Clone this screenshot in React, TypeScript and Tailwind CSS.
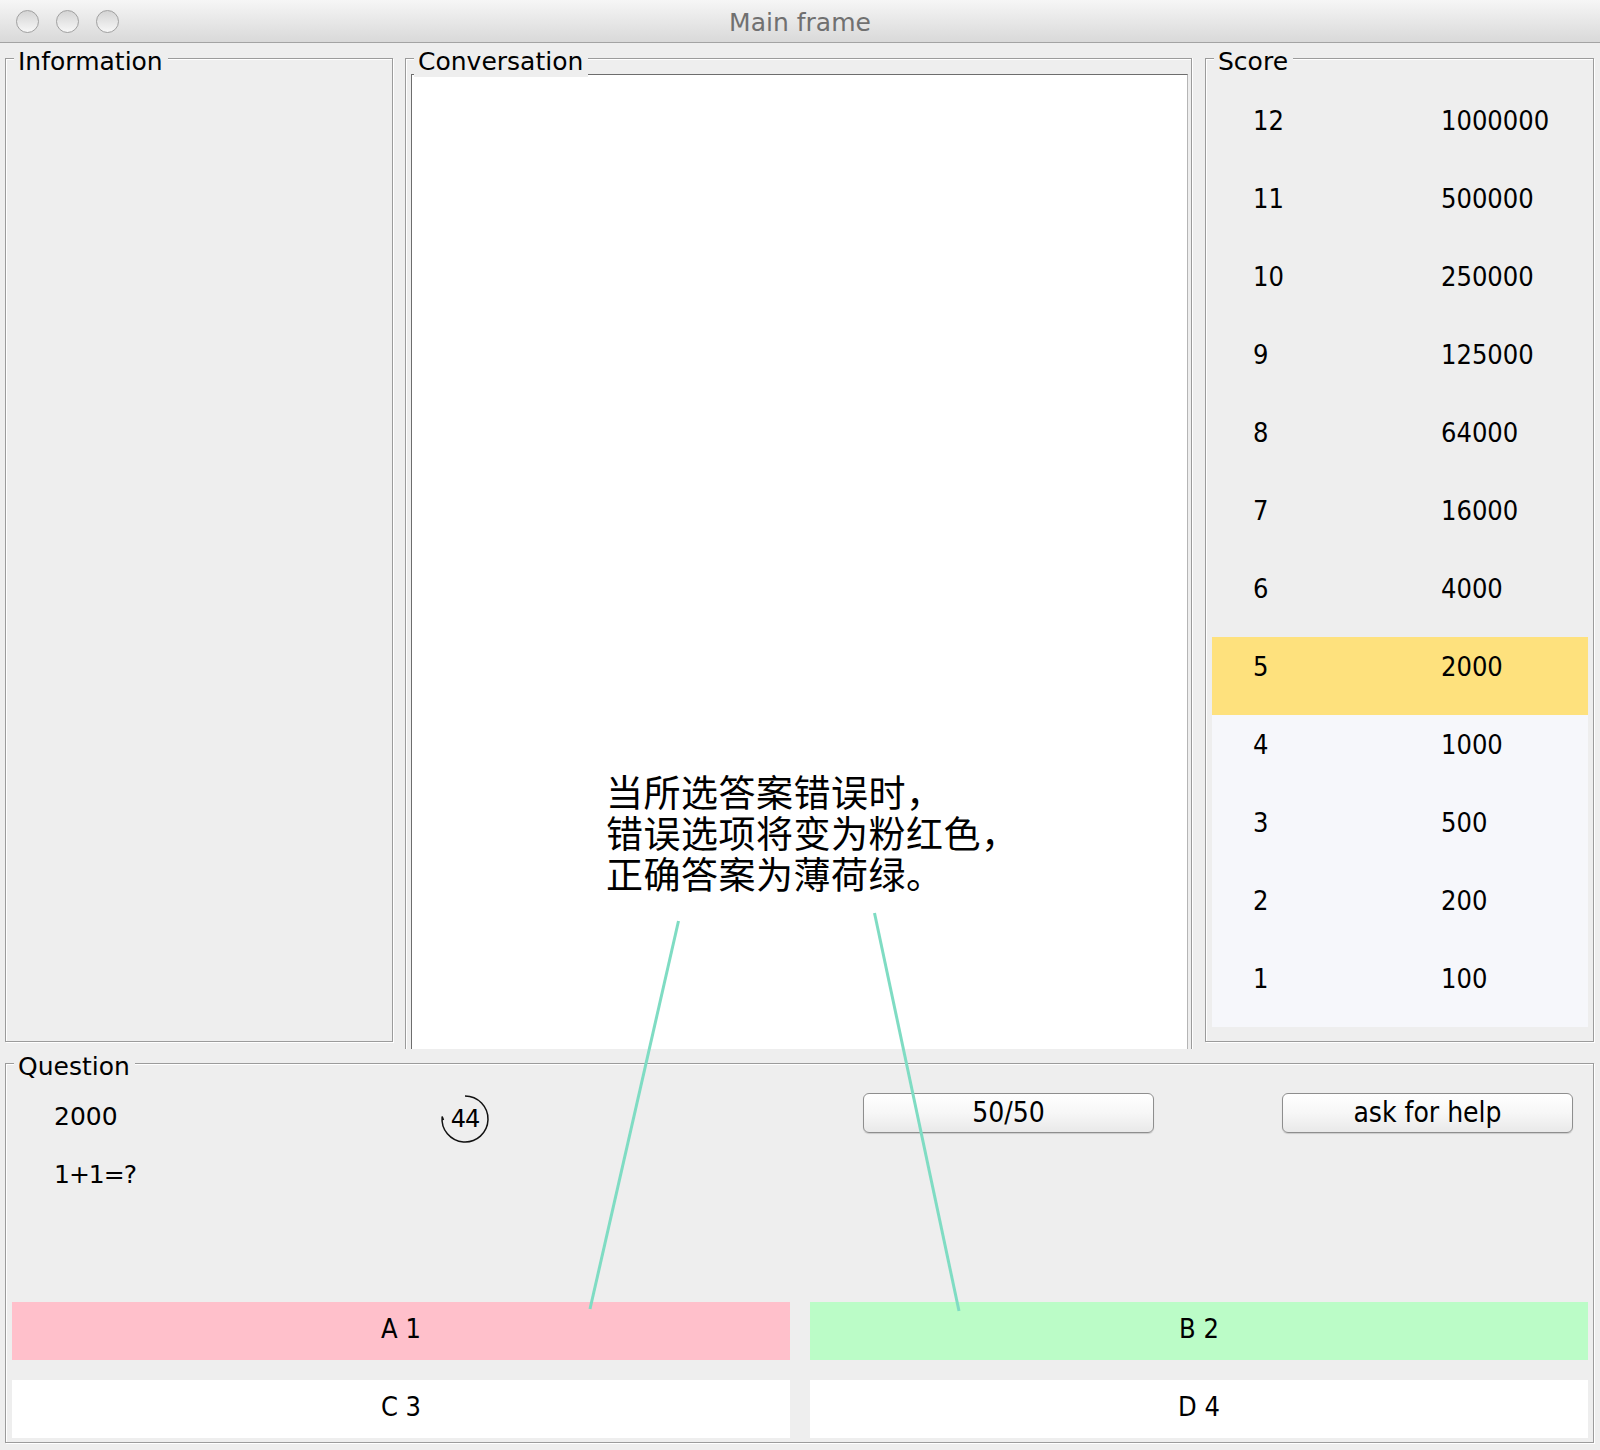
import React from "react";

const etched =
  "border border-[#9b9b9b] shadow-[inset_1px_1px_0_#ffffff,1px_1px_0_#ffffff]";

function Legend({ text }: { text: string }) {
  return (
    <span className="absolute left-[8px] top-[-12px] bg-[#eeeeee] pl-[4px] pr-[5px] text-[25px] leading-[30px] text-black whitespace-nowrap">
      {text}
    </span>
  );
}

const scores: [number, string][] = [
  [12, "1000000"],
  [11, "500000"],
  [10, "250000"],
  [9, "125000"],
  [8, "64000"],
  [7, "16000"],
  [6, "4000"],
  [5, "2000"],
  [4, "1000"],
  [3, "500"],
  [2, "200"],
  [1, "100"],
];

const cond =
  "font-['DejaVu_Sans_Condensed','DejaVu_Sans',sans-serif] font-stretch-condensed";

function Button({ label }: { label: string }) {
  return (
    <div
      className={`flex h-[40px] w-[291px] items-center justify-center rounded-[6px] border border-[#8e8e8e] bg-gradient-to-b from-[#ffffff] via-[#f7f7f7] to-[#e9e9e9] shadow-[0_1px_1px_rgba(0,0,0,0.15)] text-[28px] leading-[32px] text-black ${cond}`}
    >
      {label}
    </div>
  );
}

function Answer({ label, bg }: { label: string; bg: string }) {
  return (
    <div
      className={`flex h-[58px] items-center justify-center pb-[4px] text-[27px] leading-[32px] text-black ${bg} ${cond}`}
    >
      {label}
    </div>
  );
}

export default function App() {
  return (
    <div className="relative h-[1450px] w-[1600px] overflow-hidden bg-[#eeeeee] font-['DejaVu_Sans','Noto_Sans',sans-serif] text-black">
      {/* Title bar */}
      <div className="relative flex h-[43px] items-start gap-[17px] border-b border-[#a3a3a3] bg-gradient-to-b from-[#f6f6f6] to-[#d9d9d9] pl-[16px] pt-[10px]">
        <div className="h-[23px] w-[23px] rounded-full border border-[#a0a0a0] bg-gradient-to-b from-[#d4d4d4] to-[#f7f7f7]" />
        <div className="h-[23px] w-[23px] rounded-full border border-[#a0a0a0] bg-gradient-to-b from-[#d4d4d4] to-[#f7f7f7]" />
        <div className="h-[23px] w-[23px] rounded-full border border-[#a0a0a0] bg-gradient-to-b from-[#d4d4d4] to-[#f7f7f7]" />
        <div className="absolute inset-0 flex items-center justify-center pt-[3px] text-[25px] leading-[30px] text-[#707070]">
          Main frame
        </div>
      </div>

      {/* Top row */}
      <div className="flex h-[1006px] items-start">
        {/* Information */}
        <div className={`relative ml-[5px] mt-[15px] h-[984px] w-[388px] ${etched}`}>
          <Legend text="Information" />
        </div>

        {/* Conversation */}
        <div className="relative ml-[12px] mt-[15px] flex h-[991px] w-[787px] flex-col border border-b-0 border-[#9b9b9b] pl-[5px] pr-[3px] pt-[15px] shadow-[inset_1px_1px_0_#ffffff,1px_0_0_#ffffff]">
          <Legend text="Conversation" />
          <div className="flex-1 border-l border-r border-t border-[#6d6d6d] border-r-[#b5b5b5] bg-white" />
        </div>

        {/* Score */}
        <div className={`relative ml-[13px] mt-[15px] h-[984px] w-[389px] pl-[6px] pr-[5px] pt-[32px] ${etched}`}>
          <Legend text="Score" />
          <div className="flex flex-col">
            {scores.map(([lvl, amt]) => (
              <div
                key={lvl}
                className={`flex h-[78px] items-start pl-[41px] pt-[16px] text-[27px] leading-[28px] ${cond} ${
                  lvl === 5 ? "bg-[#fee17d]" : lvl < 5 ? "bg-[#f6f7fb]" : ""
                }`}
              >
                <span className="w-[188px]">{lvl}</span>
                <span>{amt}</span>
              </div>
            ))}
          </div>
        </div>
      </div>

      {/* Question */}
      <div className={`relative ml-[5px] mt-[14px] flex h-[380px] w-[1589px] flex-col ${etched}`}>
        <Legend text="Question" />
        <div className="flex h-[238px] items-start">
          <div className="ml-[48px] mt-[38px] flex w-[100px] flex-col gap-[28px] text-[25px] leading-[30px]">
            <span>2000</span>
            <span className="tracking-[-1px]">1+1=?</span>
          </div>
          <div className="relative ml-[286px] mt-[30px] flex h-[50px] w-[50px] items-center justify-center">
            <svg className="absolute inset-0" width="50" height="50" viewBox="0 0 50 50">
              <path
                d="M25 2 A23 23 0 1 1 2.13 22.6 L3.5 26"
                fill="none"
                stroke="#111"
                strokeWidth="1.5"
              />
            </svg>
            <span className="relative text-[24px] leading-[28px] tracking-[-1px]">44</span>
          </div>
          <div className="ml-[373px] mt-[29px]">
            <Button label="50/50" />
          </div>
          <div className="ml-[128px] mt-[29px]">
            <Button label="ask for help" />
          </div>
        </div>
        <div className="grid grid-cols-2 gap-x-[20px] gap-y-[20px] pl-[6px] pr-[5px]">
          <Answer label="A 1" bg="bg-[#ffc0cb]" />
          <Answer label="B 2" bg="bg-[#bbfcc7]" />
          <Answer label="C 3" bg="bg-white" />
          <Answer label="D 4" bg="bg-white" />
        </div>
      </div>

      {/* Annotation overlay */}
      <div className="absolute left-[606px] top-[771px] font-['Noto_Sans_CJK_SC','Noto_Sans',sans-serif] text-[37px] leading-[41px] tracking-[0.5px] text-black whitespace-nowrap">
        当所选答案错误时，
        <br />
        错误选项将变为粉红色，
        <br />
        正确答案为薄荷绿。
      </div>
      <svg
        className="pointer-events-none absolute left-0 top-0"
        width="1600"
        height="1450"
        viewBox="0 0 1600 1450"
      >
        <line x1="678.5" y1="921" x2="590" y2="1309" stroke="#7fdcc3" strokeWidth="3" />
        <line x1="874.5" y1="913" x2="959" y2="1311" stroke="#7fdcc3" strokeWidth="3" />
      </svg>
    </div>
  );
}
